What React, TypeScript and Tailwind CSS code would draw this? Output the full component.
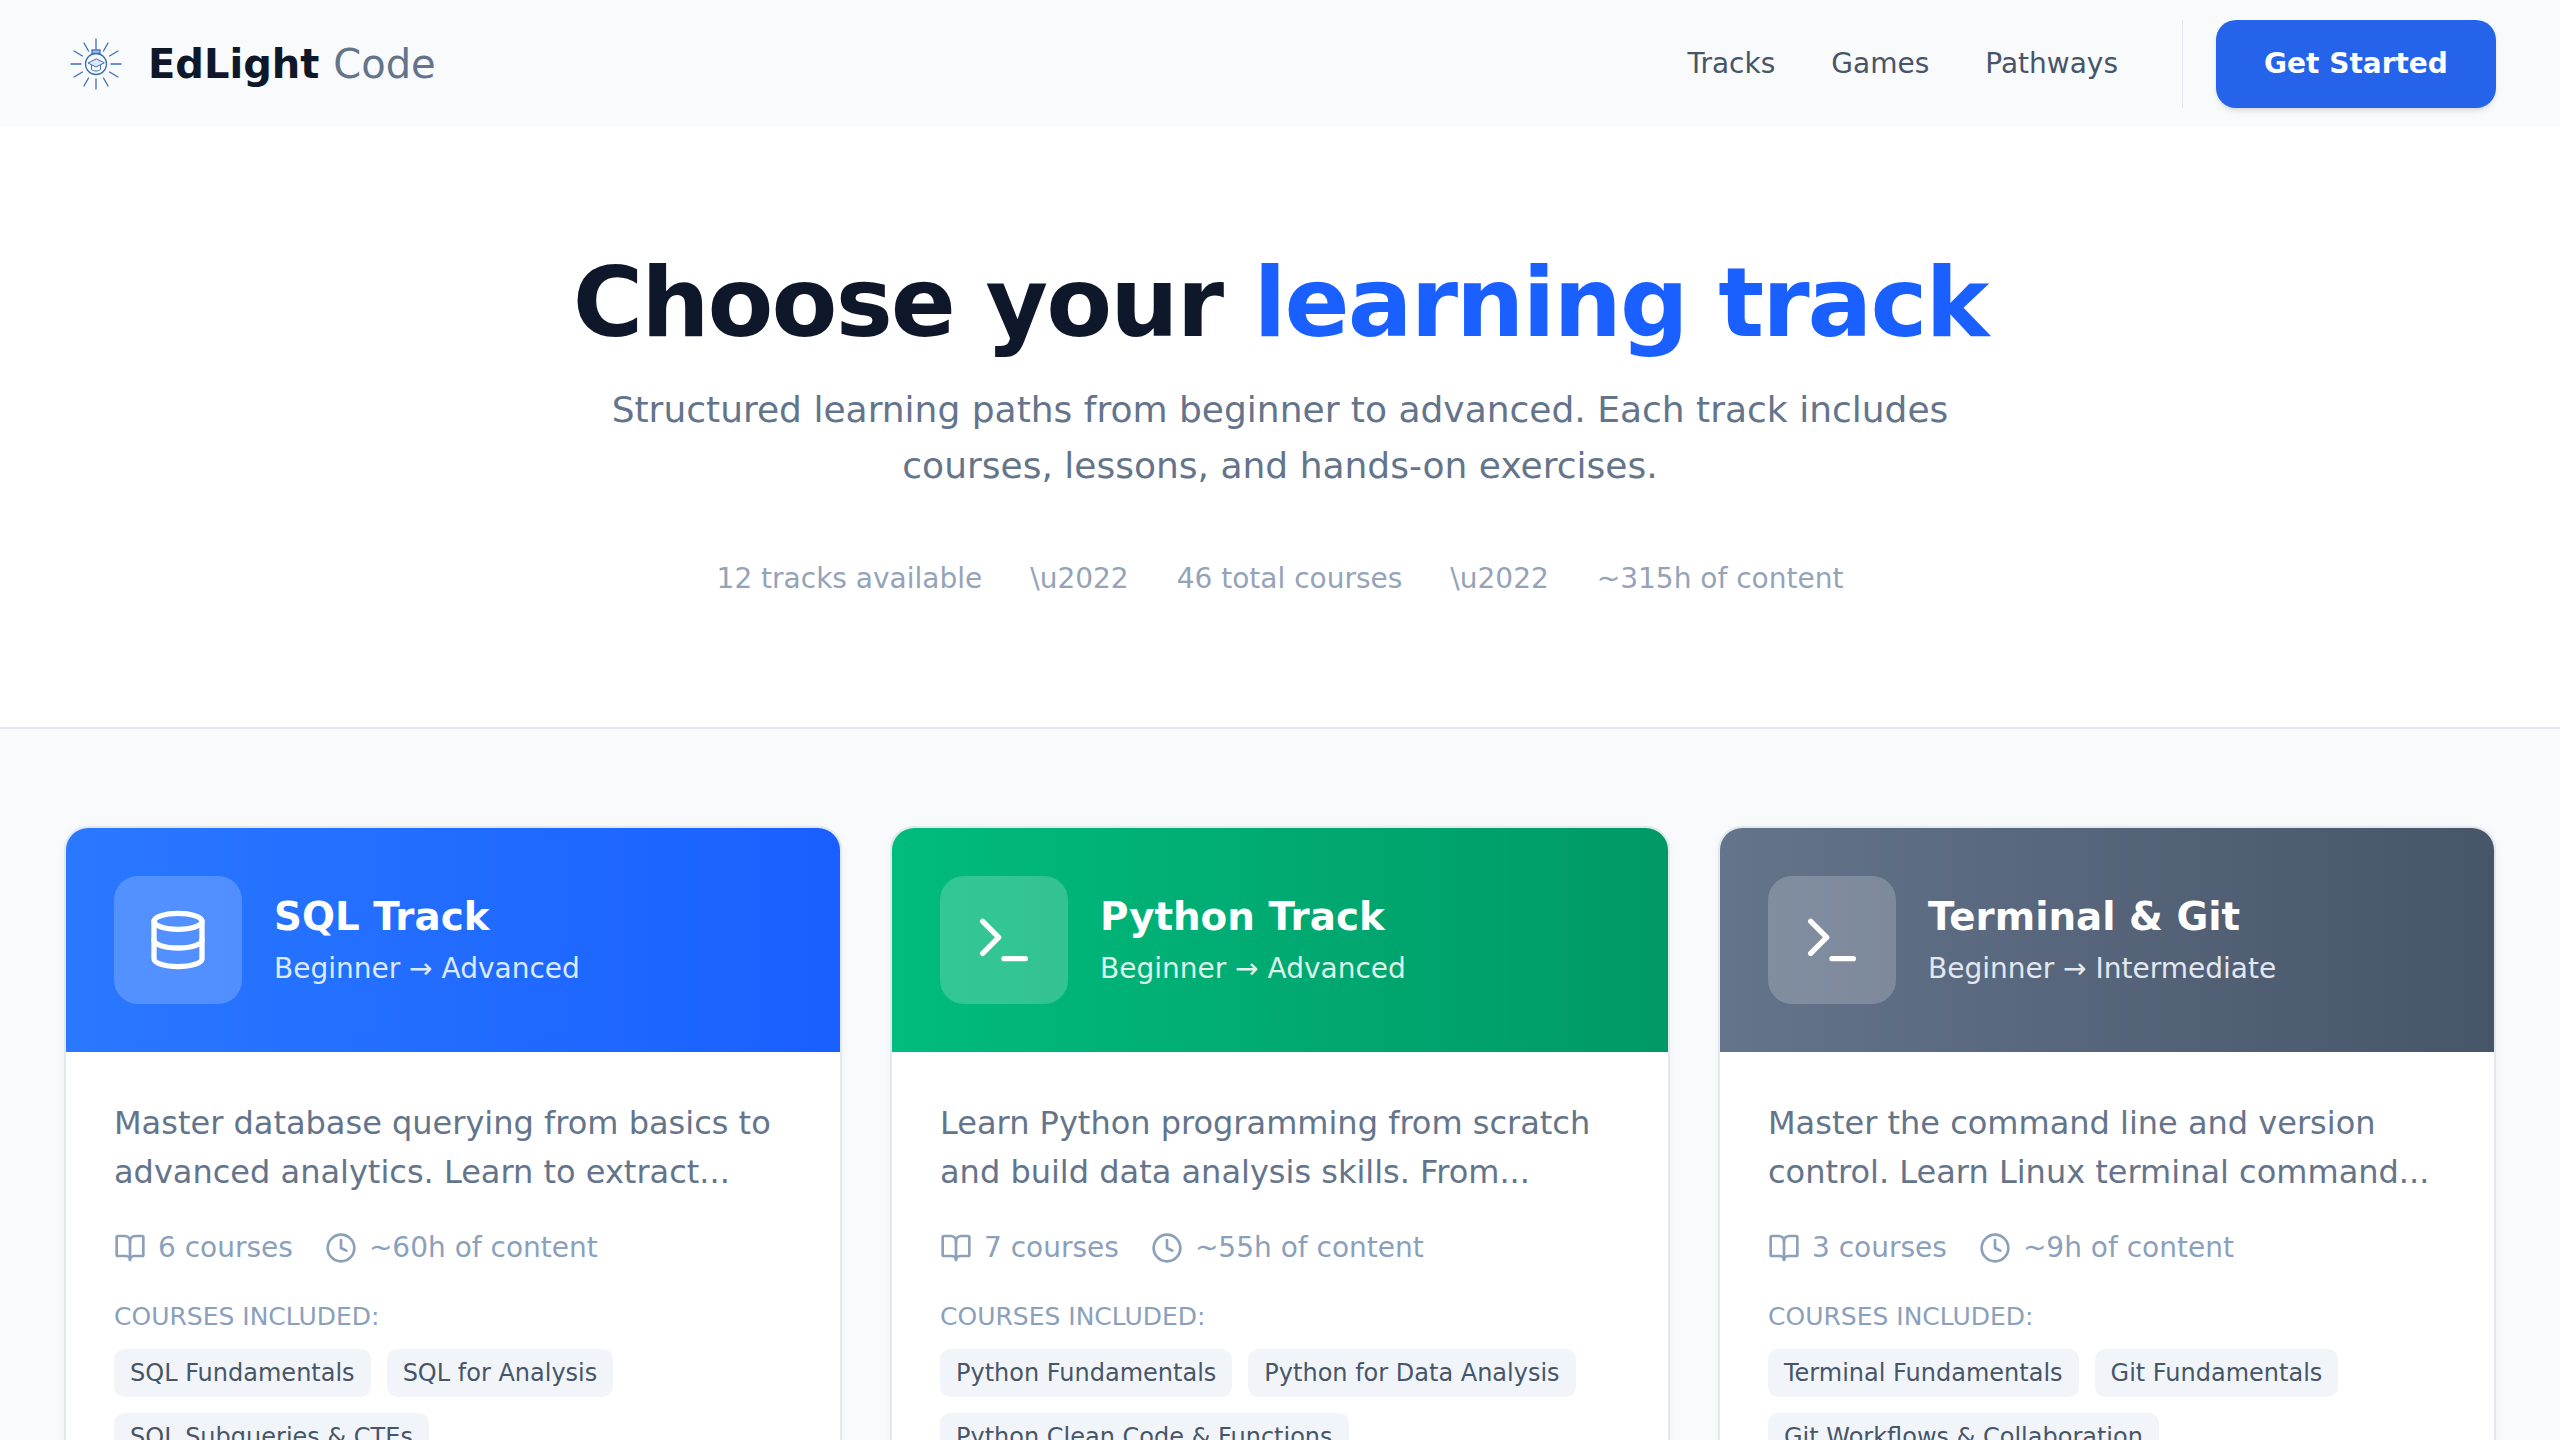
import { BookOpen, Clock, Database, Terminal } from "lucide-react";

interface Track {
  title: string;
  level: string;
  description: string;
  courses: string;
  hours: string;
  tags: string[];
  header: string;
  subtitle: string;
  icon: "database" | "terminal";
}

const tracks: Track[] = [
  {
    title: "SQL Track",
    level: "Beginner → Advanced",
    description:
      "Master database querying from basics to advanced analytics. Learn to extract...",
    courses: "6 courses",
    hours: "~60h of content",
    tags: ["SQL Fundamentals", "SQL for Analysis", "SQL Subqueries & CTEs"],
    header: "bg-gradient-to-r from-[#2a78ff] to-[#1a5fff]",
    subtitle: "text-[#dbeafe]",
    icon: "database",
  },
  {
    title: "Python Track",
    level: "Beginner → Advanced",
    description:
      "Learn Python programming from scratch and build data analysis skills. From...",
    courses: "7 courses",
    hours: "~55h of content",
    tags: [
      "Python Fundamentals",
      "Python for Data Analysis",
      "Python Clean Code & Functions",
    ],
    header: "bg-gradient-to-r from-[#00bc7d] to-[#009966]",
    subtitle: "text-[#dcf3ea]",
    icon: "terminal",
  },
  {
    title: "Terminal & Git",
    level: "Beginner → Intermediate",
    description:
      "Master the command line and version control. Learn Linux terminal command...",
    courses: "3 courses",
    hours: "~9h of content",
    tags: ["Terminal Fundamentals", "Git Fundamentals", "Git Workflows & Collaboration"],
    header: "bg-gradient-to-r from-[#64748b] to-[#475569]",
    subtitle: "text-[#e2e8f0]",
    icon: "terminal",
  },
];

// Bulb logo with the graduation cap inside
const Logo = () => (
  <svg viewBox="0 0 52 52" className="w-[52px] h-[52px] shrink-0" fill="none" stroke="#3b6fb8" strokeWidth="1.3" strokeLinecap="round">
    <path d="M26 1v10M14 5l4.500 8M38 5l-4.500 8M4 13l8.500 5M48 13l-8.500 5M1 26h10M41 26h10M4 39l8.500-5M48 39l-8.500-5M14 48l4.500-8M38 48l-4.500-8M26 41v10" />
    <rect x="22" y="12" width="8" height="3.500" fill="#a9c0e2" />
    <circle cx="26" cy="26" r="10.500" />
    <path d="M26 21l-8 4 8 4 8-4z" fill="#dce6f4" strokeWidth="1" />
    <path d="M21.500 27.500v4c2.500 2 6.500 2 9 0v-4" strokeWidth="1" />
  </svg>
);

const TrackCard = ({ track }: { track: Track }) => (
  <div className="bg-white rounded-[24px] border-2 border-[#e2e8f0] overflow-hidden shadow-[0_2px_10px_rgba(15,23,42,0.04)]">
    <div className={`${track.header} p-[48px] flex items-center gap-[32px]`}>
      <div className="w-[128px] h-[128px] rounded-[24px] bg-white/20 flex items-center justify-center shrink-0">
        {track.icon === "database" ? (
          <Database size={64} color="white" strokeWidth={2} />
        ) : (
          <Terminal size={64} color="white" strokeWidth={2} />
        )}
      </div>
      <div>
        <h3 className="text-[38.800px] leading-[55px] font-bold text-white">{track.title}</h3>
        <p className={`mt-[3px] text-[28px] leading-[44px] ${track.subtitle}`}>{track.level}</p>
      </div>
    </div>
    <div className="px-[48px] pt-[47px] pb-[48px]">
      <p className="text-[32px] leading-[49px] text-[#64748b]">{track.description}</p>
      <div className="flex items-center gap-[32px] mt-[29px] text-[28px] leading-[44px] text-[#8aa0bb]">
        <span className="flex items-center gap-[12px]">
          <BookOpen size={32} strokeWidth={2} />
          {track.courses}
        </span>
        <span className="flex items-center gap-[12px]">
          <Clock size={32} strokeWidth={2} />
          {track.hours}
        </span>
      </div>
      <div className="mt-[28px] text-[25px] leading-[38px] uppercase text-[#8aa0bb]">
        Courses included:
      </div>
      <div className="flex flex-wrap gap-[16px] mt-[13px]">
        {track.tags.map((tag) => (
          <span
            key={tag}
            className="bg-[#f1f5f9] text-[#475569] text-[24px] leading-[36px] px-[16px] py-[6px] rounded-[10px]"
          >
            {tag}
          </span>
        ))}
      </div>
    </div>
  </div>
);

export default function App() {
  return (
    <div className="h-screen overflow-hidden bg-white font-['DejaVu_Sans',sans-serif]">
      <nav className="h-[127px] bg-[#f8fafc] flex items-center justify-between pl-[70px] pr-[64px]">
        <div className="flex items-center gap-[26px]">
          <Logo />
          <span className="text-[40px] leading-none font-bold text-[#0f172a]">
            EdLight <span className="font-normal text-[#64748b]">Code</span>
          </span>
        </div>
        <div className="flex items-center">
          <div className="flex items-center gap-[56px] text-[28px] text-[#475569]">
            <span>Tracks</span>
            <span>Games</span>
            <span>Pathways</span>
          </div>
          <div className="w-px h-[88px] bg-[#e2e8f0] ml-[64px] mr-[33px]" />
          <button className="h-[88px] w-[280px] rounded-[20px] bg-[#2563eb] text-white text-[28px] font-bold shadow-md">
            Get Started
          </button>
        </div>
      </nav>

      <header className="h-[602px] border-b-2 border-[#e2e8f0] flex flex-col items-center pt-[116px] text-center">
        <h1 className="text-[96px] leading-[120px] font-bold tracking-[-0.02em] text-[#0f172a]">
          Choose your <span className="text-[#1a5fff]">learning track</span>
        </h1>
        <p className="mt-[19px] w-[1400px] text-[36px] leading-[56px] text-[#64748b]">
          Structured learning paths from beginner to advanced. Each track includes courses, lessons, and hands-on exercises.
        </p>
        <div className="flex items-center gap-[48px] mt-[63px] text-[28px] leading-[44px] text-[#94a3b8]">
          <span>12 tracks available</span>
          <span>\u2022</span>
          <span>46 total courses</span>
          <span>\u2022</span>
          <span>~315h of content</span>
        </div>
      </header>

      <main className="bg-[#f8fafc] px-[64px] pt-[97px] pb-[64px]">
        <div className="grid grid-cols-[778px_780px_778px] gap-[48px]">
          {tracks.map((track) => (
            <TrackCard key={track.title} track={track} />
          ))}
        </div>
      </main>
    </div>
  );
}
